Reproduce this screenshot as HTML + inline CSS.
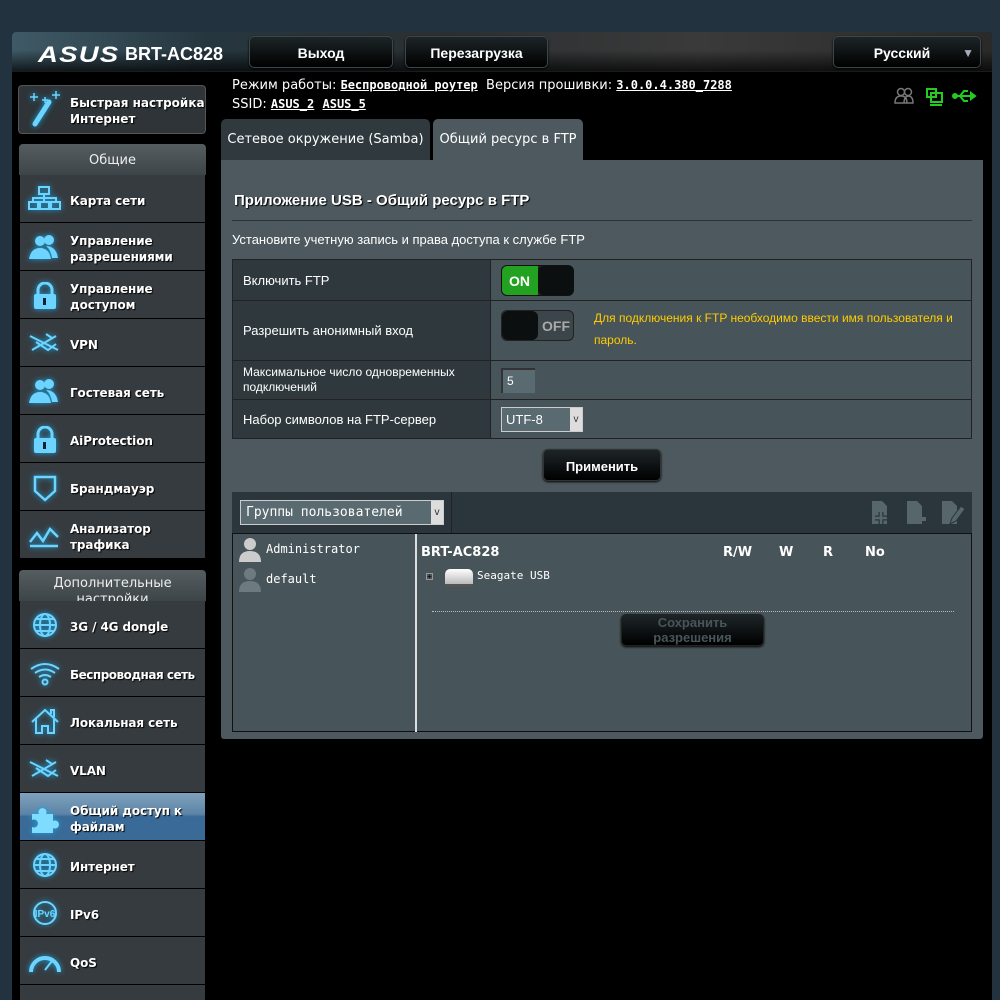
<!DOCTYPE html>
<html><head><meta charset="utf-8">
<style>
*{box-sizing:border-box;margin:0;padding:0}
html,body{overflow:hidden}
body{width:1000px;height:1000px;background:#22323e;font-family:"Liberation Sans","DejaVu Sans",sans-serif;color:#fff;position:relative;overflow:hidden}
.frame{position:absolute;left:12px;top:32px;width:980px;height:968px;background:#000;border-radius:4px 4px 0 0}
.hdr{position:absolute;left:12px;top:32px;width:980px;height:40px;background:linear-gradient(90deg,#3f5a66 0%,#26363f 20%,#2c2f31 45%,#3a3a3a 70%,#2a2a2a 100%);border-radius:4px 4px 0 0;border-bottom:1px solid #566}
.hdr2{position:absolute;left:12px;top:50px;width:980px;height:22px;background:linear-gradient(180deg,rgba(0,0,0,0),rgba(0,0,0,.75))}
.logo{position:absolute;left:38px;top:42px;font:italic bold 22px "Liberation Sans",sans-serif;letter-spacing:1px;transform:scaleX(1.25);transform-origin:left}
.model{position:absolute;left:125px;top:44px;font:bold 18px "Liberation Sans",sans-serif}
.btn{position:absolute;background:linear-gradient(#1d2528,#000);border:1px solid #3c4649;border-radius:5px;font:bold 14px "Liberation Sans",sans-serif;text-align:center;box-shadow:0 1px 2px #000}
.sb{position:absolute;left:20px;width:185px;background:#363b3f;border-bottom:1px solid #000}
.sb span{position:absolute;left:50px;font:bold 12px "DejaVu Sans",sans-serif;line-height:16px;text-shadow:1px 1px 1px #000;letter-spacing:-.1px;white-space:nowrap}
.sb svg{position:absolute;left:8px;top:11px;filter:drop-shadow(0 0 3px #1ba3e0)}
.cat{position:absolute;left:19px;width:187px;height:31px;background:linear-gradient(#555d61,#3e4548);border-radius:4px 4px 0 0;text-align:center;font:13px "DejaVu Sans",sans-serif;color:#eee;padding-top:8px}
.info{position:absolute;font:13px "DejaVu Sans",sans-serif;color:#fff}
.info b{font:bold 12px "DejaVu Sans Mono",monospace;text-decoration:underline}
.tab{position:absolute;top:119px;height:41px;border-radius:5px 5px 0 0;font:13px "DejaVu Sans",sans-serif;padding-top:13px;text-align:center}
.panel{position:absolute;left:221px;top:160px;width:762px;height:579px;background:#4d595e;border-radius:0 0 3px 3px}
.t{position:absolute;font:13px "Liberation Sans",sans-serif}
table{border-collapse:collapse;position:absolute;left:232px;top:259px;width:740px}
td{border:1px solid #222;font:13px "Liberation Sans",sans-serif;padding-left:10px}
td.l{background:#2f393d;width:258px}
td.r{background:#475459}
</style></head><body>
<div class="frame"></div>
<div class="hdr"></div><div class="hdr2"></div>
<div class="logo">ASUS</div>
<div class="model">BRT-AC828</div>
<div class="btn" style="left:249px;top:36px;width:144px;height:32px;padding-top:8px">Выход</div>
<div class="btn" style="left:405px;top:36px;width:143px;height:32px;padding-top:8px">Перезагрузка</div>
<div class="btn" style="left:833px;top:36px;width:148px;height:32px;padding-top:8px;padding-right:10px">Русский<span style="position:absolute;right:6px;top:9px;color:#aab;font-size:12px">▼</span></div>

<div class="info" style="left:232px;top:78px">Режим работы: <b>Беспроводной роутер</b> &nbsp;Версия прошивки: <b>3.0.0.4.380_7288</b></div>
<div class="info" style="left:232px;top:97px">SSID: <b>ASUS_2</b> &nbsp;<b>ASUS_5</b></div>
<svg style="position:absolute;left:893px;top:86px" width="85" height="20">
<g fill="none" stroke="#777" stroke-width="1.5"><circle cx="8" cy="6" r="3.5"/><circle cx="15" cy="6" r="3.5"/><path d="M2 17q0-7 6-7t6 7zM11 17q0-6 4-7 5 0 5 7z"/></g>
<g fill="none" stroke="#2c2" stroke-width="2"><rect x="34" y="3" width="9" height="8"/><rect x="38" y="7" width="11" height="9"/><path d="M37 19h12"/></g>
<g stroke="#2c2" stroke-width="2" fill="#2c2"><path d="M61 10h20" /><path d="M67 10l4-5h4M67 10l4 5h4" fill="none"/><polygon points="82,10 78,7 78,13"/><circle cx="62" cy="10" r="2"/></g>
</svg>

<div style="position:absolute;left:18px;top:85px;width:188px;height:49px;background:#2e3437;border:1px solid #555;border-radius:4px"></div>
<svg style="position:absolute;left:26px;top:88px;filter:drop-shadow(0 0 3px #1ba3e0)" width="40" height="40"><g stroke="#6cd4ff" stroke-width="1.5"><path d="M8 5v8M4 9h8M30 3v8M26 7h8M19 9v6M16 12h6"/></g><path d="M23 14l-14 22" stroke="#6cd4ff" stroke-width="5" stroke-linecap="round"/></svg>
<div style="position:absolute;left:70px;top:95px;font:bold 12px 'DejaVu Sans',sans-serif;line-height:16px;text-shadow:1px 1px 1px #000">Быстрая настройка<br>Интернет</div>

<div class="cat" style="top:144px;padding-top:9px">Общие</div>
<div class="cat" style="top:570px;line-height:16px;overflow:hidden;padding-top:6px">Дополнительные<br>настройки</div>

<div class="sb" style="top:175px;height:48px"><svg width="34" height="26"><g fill="none" stroke="#6cd4ff" stroke-width="2"><rect x="11" y="1" width="10" height="7"/><rect x="1" y="16" width="9" height="7"/><rect x="12" y="16" width="9" height="7"/><rect x="23" y="16" width="9" height="7"/><path d="M16 8v8M5 16v-4h23v4"/></g></svg><span style="top:18px">Карта сети</span></div>
<div class="sb" style="top:223px;height:48px"><svg width="34" height="26"><g fill="#6cd4ff"><circle cx="12" cy="7" r="5"/><circle cx="21" cy="6" r="5"/><path d="M1 25q2-11 11-11t11 11zM18 12q10 0 12 12h-6q-1-8-6-12z"/></g></svg><span style="top:10px">Управление<br>разрешениями</span></div>
<div class="sb" style="top:271px;height:48px"><svg width="34" height="28"><path d="M10 12v-4a7 7 0 0 1 14 0v4" fill="none" stroke="#6cd4ff" stroke-width="3"/><rect x="6" y="12" width="22" height="15" rx="2" fill="#6cd4ff"/><rect x="15" y="16" width="3" height="7" fill="#123"/></svg><span style="top:10px">Управление<br>доступом</span></div>
<div class="sb" style="top:319px;height:48px"><svg width="34" height="26"><g fill="none" stroke="#6cd4ff" stroke-width="2"><path d="M2 6l28 14M4 20l24-14M8 12l12 8 8-6M18 4l6 4"/></g></svg><span style="top:18px">VPN</span></div>
<div class="sb" style="top:367px;height:48px"><svg width="34" height="26"><g fill="#6cd4ff"><circle cx="12" cy="7" r="5"/><circle cx="21" cy="6" r="5"/><path d="M1 25q2-11 11-11t11 11zM18 12q10 0 12 12h-6q-1-8-6-12z"/></g></svg><span style="top:18px">Гостевая сеть</span></div>
<div class="sb" style="top:415px;height:48px"><svg width="34" height="28"><path d="M10 12v-4a7 7 0 0 1 14 0v4" fill="none" stroke="#6cd4ff" stroke-width="3"/><rect x="6" y="12" width="22" height="15" rx="2" fill="#6cd4ff"/><rect x="15" y="16" width="3" height="7" fill="#123"/></svg><span style="top:18px">AiProtection</span></div>
<div class="sb" style="top:463px;height:48px"><svg width="34" height="28"><path d="M7 3h20v14l-10 9-10-9z" fill="none" stroke="#6cd4ff" stroke-width="2.5"/></svg><span style="top:18px">Брандмауэр</span></div>
<div class="sb" style="top:511px;height:48px"><svg width="34" height="28"><g fill="none" stroke="#6cd4ff" stroke-width="2.5"><path d="M2 20l7-9 6 8 7-12 8 8M2 24h28"/></g></svg><span style="top:10px">Анализатор<br>трафика</span></div>

<div class="sb" style="top:601px;height:48px"><svg width="34" height="28"><g fill="none" stroke="#6cd4ff" stroke-width="2"><circle cx="17" cy="13" r="11"/><ellipse cx="17" cy="13" rx="5" ry="11"/><path d="M6 13h22M8 7h18M8 19h18"/></g></svg><span style="top:18px">3G / 4G dongle</span></div>
<div class="sb" style="top:649px;height:48px"><svg width="34" height="28"><g fill="none" stroke="#6cd4ff" stroke-width="2"><path d="M3 9q14-10 28 0M7 13q10-7 20 0M11 17q6-4 12 0"/><circle cx="17" cy="22" r="2.5"/></g></svg><span style="top:18px;letter-spacing:-.5px">Беспроводная сеть</span></div>
<div class="sb" style="top:697px;height:48px"><svg width="34" height="28"><path d="M4 14l13-12 13 12M8 11v14h6v-7h6v7h6V11M23 6V2h3v7" fill="none" stroke="#6cd4ff" stroke-width="2"/></svg><span style="top:18px">Локальная сеть</span></div>
<div class="sb" style="top:745px;height:48px"><svg width="34" height="26"><g fill="none" stroke="#6cd4ff" stroke-width="2"><path d="M2 6l28 14M4 20l24-14M8 12l12 8 8-6M18 4l6 4"/></g></svg><span style="top:18px">VLAN</span></div>
<div class="sb" style="top:793px;height:48px;background:linear-gradient(#7fa2bd 0%,#5d84a6 45%,#3a6b98 50%,#3a6a96 100%)"><svg width="34" height="30"><path d="M4 10h7a4 4 0 1 1 7 0h7v7a4 4 0 1 1 0 7v5H4v-6a4 4 0 1 0 0-7z" fill="#7fdcff"/></svg><span style="top:10px">Общий доступ к<br>файлам</span></div>
<div class="sb" style="top:841px;height:48px"><svg width="34" height="28"><g fill="none" stroke="#6cd4ff" stroke-width="2"><circle cx="17" cy="13" r="11"/><ellipse cx="17" cy="13" rx="5" ry="11"/><path d="M6 13h22M8 7h18M8 19h18"/></g></svg><span style="top:18px">Интернет</span></div>
<div class="sb" style="top:889px;height:48px"><svg width="34" height="28"><circle cx="17" cy="13" r="11" fill="none" stroke="#6cd4ff" stroke-width="2"/><text x="17" y="17" fill="#6cd4ff" font-size="10" font-weight="bold" text-anchor="middle" font-family="Liberation Sans">IPv6</text></svg><span style="top:18px">IPv6</span></div>
<div class="sb" style="top:937px;height:48px"><svg width="34" height="28"><path d="M3 24a14 14 0 1 1 28 0" fill="none" stroke="#6cd4ff" stroke-width="4"/><path d="M17 22l7-9" stroke="#6cd4ff" stroke-width="2"/></svg><span style="top:18px">QoS</span></div>
<div class="sb" style="top:985px;height:30px"><span style="top:12px">А</span></div>

<div class="tab" style="left:221px;width:209px;background:#2f393e">Сетевое окружение (Samba)</div>
<div class="tab" style="left:433px;width:150px;background:#4d595e">Общий ресурс в FTP</div>
<div class="panel"></div>
<div class="t" style="left:234px;top:192px;font:bold 15px 'Liberation Sans',sans-serif;text-shadow:1px 1px 1px #000">Приложение USB - Общий ресурс в FTP</div>
<div style="position:absolute;left:232px;top:220px;width:740px;height:1px;background:#2a3236"></div>
<div class="t" style="left:232px;top:232px">Установите учетную запись и права доступа к службе FTP</div>

<table>
<tr style="height:41px"><td class="l">Включить FTP</td><td class="r"><div style="position:relative;width:73px;height:31px;border-radius:6px;background:#222;border:1px solid #111;margin-left:0"><div style="position:absolute;left:0;top:0;width:36px;height:29px;background:#23a121;border-radius:5px 0 0 5px;font:bold 14px 'Liberation Sans';padding:7px 0 0 7px">ON</div><div style="position:absolute;left:36px;top:0;width:36px;height:29px;background:#0b0f10;border-radius:6px"></div></div></td></tr>
<tr style="height:60px"><td class="l">Разрешить анонимный вход</td><td class="r"><div style="position:relative;width:73px;height:31px;border-radius:6px;background:#3c4549;border:1px solid #222;float:left;margin-right:20px"><div style="position:absolute;left:0;top:0;width:36px;height:29px;background:#0b0f10;border-radius:6px"></div><div style="position:absolute;left:40px;top:7px;font:bold 14px 'Liberation Sans';color:#aaa">OFF</div></div><div style="color:#ffcc00;font-size:12px;line-height:22px;margin-top:-3px">Для подключения к FTP необходимо ввести имя пользователя и пароль.</div></td></tr>
<tr style="height:39px"><td class="l" style="font-size:12px;line-height:15px">Максимальное число одновременных подключений</td><td class="r"><div style="width:34px;height:25px;background:#596a70;border-top:2px solid #333;border-left:2px solid #333;font-size:12px;padding:4px 0 0 4px">5</div></td></tr>
<tr style="height:39px"><td class="l">Набор символов на FTP-сервер</td><td class="r"><div style="width:82px;height:25px;background:#596a70;border:1px solid #ccc;font-size:13px;padding:4px 0 0 4px;position:relative">UTF-8<div style="position:absolute;right:0;top:0;width:12px;height:23px;background:#ddd;color:#333;font-size:10px;text-align:center;padding-top:6px">v</div></div></td></tr>
</table>

<div class="btn" style="left:543px;top:449px;width:118px;height:32px;padding-top:9px;font-size:13px;border-color:#333">Применить</div>

<div style="position:absolute;left:232px;top:492px;width:740px;height:41px;background:#2a363b"></div>
<div style="position:absolute;left:232px;top:492px;width:220px;height:41px;background:#2a363b;border-right:1px solid #222"></div>
<div style="position:absolute;left:240px;top:500px;width:204px;height:25px;background:#596a70;border:1px solid #ccc;font:13px 'DejaVu Sans Mono',monospace;padding:4px 0 0 5px">Группы пользователей<div style="position:absolute;right:0;top:0;width:12px;height:23px;background:#ddd;color:#333;font-size:10px;text-align:center;padding-top:6px">v</div></div>
<svg style="position:absolute;left:870px;top:500px" width="96" height="26"><g fill="#56666c"><path d="M2 1h10l5 5v18H2z"/><path d="M37 1h10l5 5v18H37z"/><path d="M72 1h10l5 5v18H72z"/></g><path d="M11 12v12M5 18h12" stroke="#2a363b" stroke-width="5"/><path d="M11 12v12M5 18h12" stroke="#56666c" stroke-width="2.5"/><path d="M42 19h14" stroke="#56666c" stroke-width="4"/><path d="M80 24l2-6 9-12 4 3-9 12z" fill="#56666c" stroke="#2a363b" stroke-width="1"/></svg>

<div style="position:absolute;left:232px;top:533px;width:740px;height:199px;background:#475459;border:1px solid #111"></div>
<div style="position:absolute;left:415px;top:534px;width:2px;height:198px;background:#ddd"></div>
<svg style="position:absolute;left:236px;top:537px" width="30" height="60"><g fill="#ccc"><circle cx="14" cy="7" r="6"/><path d="M3 25q0-11 11-11t11 11z"/></g><g fill="#6d7b80"><circle cx="14" cy="37" r="6"/><path d="M3 55q0-11 11-11t11 11z"/></g></svg>
<div style="position:absolute;left:266px;top:542px;font:12px 'DejaVu Sans Mono',monospace">Administrator</div>
<div style="position:absolute;left:266px;top:572px;font:12px 'DejaVu Sans Mono',monospace">default</div>
<div style="position:absolute;left:421px;top:545px;font:bold 13px 'DejaVu Sans',sans-serif">BRT-AC828</div>
<div style="position:absolute;left:723px;top:545px;font:bold 13px 'DejaVu Sans',sans-serif">R/W</div>
<div style="position:absolute;left:779px;top:545px;font:bold 13px 'DejaVu Sans',sans-serif">W</div>
<div style="position:absolute;left:823px;top:545px;font:bold 13px 'DejaVu Sans',sans-serif">R</div>
<div style="position:absolute;left:865px;top:545px;font:bold 13px 'DejaVu Sans',sans-serif">No</div>
<div style="position:absolute;left:426px;top:573px;width:7px;height:7px;border:1px solid #999;font-size:8px;line-height:5px;text-align:center;color:#000">+</div>
<div style="position:absolute;left:445px;top:569px;width:28px;height:18px;background:linear-gradient(#fff,#bbb);border-radius:5px 5px 2px 2px;border-bottom:3px solid #555"></div>
<div style="position:absolute;left:477px;top:569px;font:11px 'DejaVu Sans Mono',monospace">Seagate USB</div>
<div style="position:absolute;left:432px;top:611px;width:522px;border-top:1px dotted #bbb"></div>
<div class="btn" style="left:621px;top:614px;width:143px;height:32px;font-size:13px;line-height:15px;color:#4a5559;border-color:#222;overflow:hidden">Сохранить<br>разрешения</div>
</body></html>
